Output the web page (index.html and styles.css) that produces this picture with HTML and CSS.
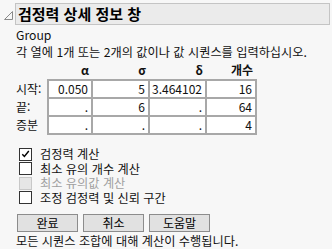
FILE: index.html
```html
<!DOCTYPE html>
<html lang="ko">
<head>
<meta charset="utf-8">
<link rel="stylesheet" href="styles.css">
</head>
<body>
<div class="panel">
  <div class="head">
    <svg class="tri" width="9" height="9" viewBox="0 0 9 9"><polygon points="8.5,0.5 8.5,8.5 0.5,8.5" fill="none" stroke="#8a8a8a" stroke-width="1"/></svg>
    <div class="title">검정력 상세 정보 창</div>
  </div>
  <div class="body">
    <div class="line">Group</div>
    <div class="line">각 열에 1개 또는 2개의 값이나 값 시퀀스를 입력하십시오.</div>
    <table class="grid">
      <tr class="hdr"><th class="lbl"></th><th class="c1">α</th><th class="c2">σ</th><th class="c3">δ</th><th class="c4">개수</th></tr>
      <tr><th class="lbl">시작:</th><td>0.050</td><td>5</td><td>3.464102</td><td>16</td></tr>
      <tr><th class="lbl">끝:</th><td>.</td><td>6</td><td>.</td><td>64</td></tr>
      <tr><th class="lbl">증분</th><td>.</td><td>.</td><td>.</td><td>4</td></tr>
    </table>
    <div class="checks">
      <label class="chk"><span class="box"><svg width="12" height="12" viewBox="0 0 12 12"><path d="M2.5 6.2 L4.8 8.6 L9.6 2.8" fill="none" stroke="#000" stroke-width="1.6"/></svg></span><span class="txt">검정력 계산</span></label>
      <label class="chk"><span class="box"></span><span class="txt">최소 유의 개수 계산</span></label>
      <label class="chk off"><span class="box"></span><span class="txt">최소 유의값 계산</span></label>
      <label class="chk"><span class="box"></span><span class="txt">조정 검정력 및 신뢰 구간</span></label>
    </div>
    <div class="buttons">
      <button class="btn">완료</button>
      <button class="btn">취소</button>
      <button class="btn">도움말</button>
    </div>
    <div class="line note">모든 시퀀스 조합에 대해 계산이 수행됩니다.</div>
  </div>
</div>
</body>
</html>
```
FILE: styles.css
```css
html, body {
  margin: 0;
  padding: 0;
  background: #f7f7f7;
}
body {
  width: 332px;
  height: 249px;
  overflow: hidden;
  font-family: "Noto Sans CJK KR", "Noto Sans", sans-serif;
  font-size: 12.2px;
  color: #111;
}
.head {
  display: flex;
  align-items: center;
  padding: 3px 2px 0 4px;
}
.tri {
  margin-right: 2px;
  margin-top: 2px;
}
.title {
  flex: 1;
  height: 20px;
  line-height: 20px;
  border: 1px solid #c4c4c4;
  background: #ebebeb;
  padding-left: 2px;
  font-size: 15px;
  font-weight: bold;
  color: #000;
}
.body {
  padding-left: 16px;
  padding-top: 2px;
}
.line {
  height: 17px;
  line-height: 17px;
  white-space: nowrap;
}
.grid {
  border-collapse: collapse;
  font-size: 12px;
}
.grid th, .grid td {
  padding: 0 3px 0 0;
  text-align: right;
  font-weight: normal;
  height: 16px;
  line-height: 16px;
  white-space: nowrap;
}
.grid .hdr th {
  font-weight: bold;
  height: 18px;
  line-height: 18px;
  vertical-align: bottom;
}
.grid th.lbl {
  text-align: left;
  width: 31px;
  padding: 0;
}
.grid td {
  background: #fff;
  border: 2px solid #a8a8a8;
}
.grid .c1 { width: 41px; }
.grid .c2 { width: 54px; }
.grid .c3 { width: 54px; }
.grid .c4 { width: 47px; }
.checks {
  margin-top: 12px;
}
.chk {
  display: flex;
  align-items: center;
  height: 14.5px;
  white-space: nowrap;
}
.txt {
  display: block;
  height: 14.5px;
  line-height: 14.5px;
}
.box {
  width: 11px;
  height: 11px;
  border: 1px solid #333;
  background: #fff;
  margin-left: 3px;
  margin-right: 8px;
  display: flex;
  align-items: center;
  justify-content: center;
}
.chk.off {
  color: #a0a0a0;
}
.chk.off .box {
  background: #e6e6e6;
  border-color: #c8c8c8;
}
.buttons {
  display: flex;
  gap: 5px;
  margin-top: 9px;
  margin-left: 1px;
}
.btn {
  width: 61px;
  height: 18px;
  padding: 0;
  border: 1px solid #8c8c8c;
  background: #e1e1e1;
  font-family: inherit;
  font-size: 12px;
  line-height: 16px;
  color: #000;
}
.note {
  margin-top: 2px;
  height: 15px;
  line-height: 15px;
}
```
